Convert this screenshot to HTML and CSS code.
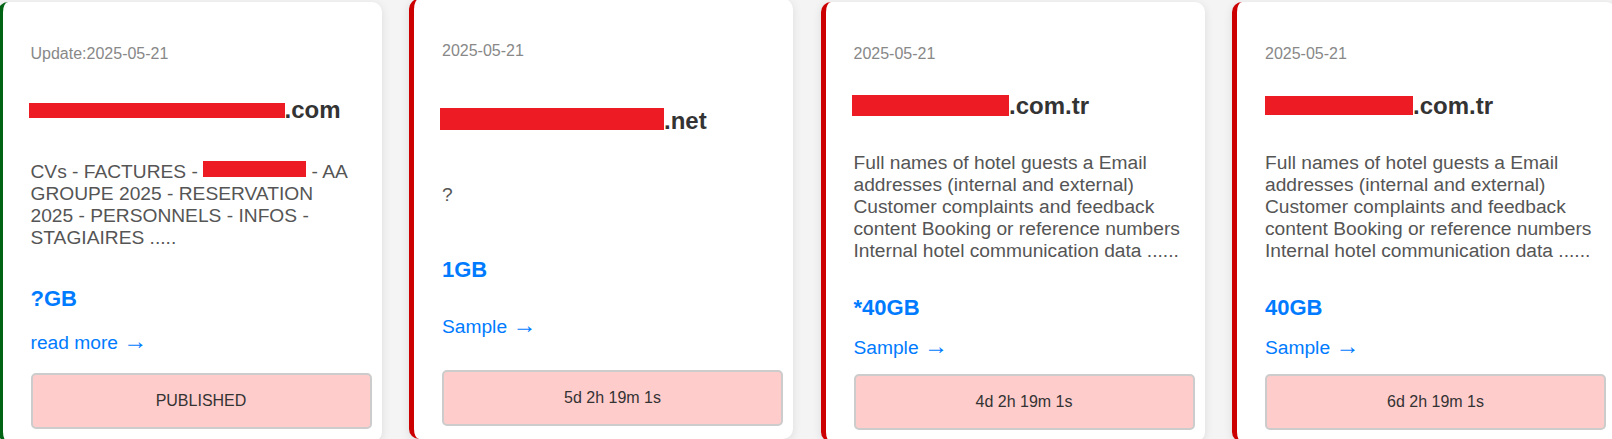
FILE: index.html
```html
<!DOCTYPE html>
<html lang="en">
<head>
    <meta charset="UTF-8">
    <meta name="viewport" content="width=device-width, initial-scale=1.0">
    <title>Leaks</title>
    <link rel="stylesheet" href="styles.css">
</head>
<body>

    <!-- Карточки -->
    <div class="cards">
        <div class="card done">
            <p class="date">Update:2025-05-21</p>
            <h3 class="title"><span class="redact r1"></span>.com</h3>
            <p class="desc">CVs - FACTURES - <span class="redact r-desc"></span> - AA GROUPE 2025 - RESERVATION 2025 - PERSONNELS - INFOS - STAGIAIRES .....</p>
            <p class="size">?GB</p>
            <a class="more" href="#">read more <span class="arrow">→</span></a>
            <div class="status">PUBLISHED</div>
        </div>

        <div class="card raised">
            <p class="date">2025-05-21</p>
            <h3 class="title"><span class="redact r2"></span>.net</h3>
            <p class="desc">?</p>
            <p class="size">1GB</p>
            <a class="more" href="#">Sample <span class="arrow">→</span></a>
            <div class="status">5d 2h 19m 1s</div>
        </div>

        <div class="card">
            <p class="date">2025-05-21</p>
            <h3 class="title"><span class="redact r3"></span>.com.tr</h3>
            <p class="desc">Full names of hotel guests a Email addresses (internal and external) Customer complaints and feedback content Booking or reference numbers Internal hotel communication data ......</p>
            <p class="size">*40GB</p>
            <a class="more" href="#">Sample <span class="arrow">→</span></a>
            <div class="status">4d 2h 19m 1s</div>
        </div>

        <div class="card">
            <p class="date">2025-05-21</p>
            <h3 class="title"><span class="redact r4"></span>.com.tr</h3>
            <p class="desc">Full names of hotel guests a Email addresses (internal and external) Customer complaints and feedback content Booking or reference numbers Internal hotel communication data ......</p>
            <p class="size">40GB</p>
            <a class="more" href="#">Sample <span class="arrow">→</span></a>
            <div class="status">6d 2h 19m 1s</div>
        </div>
    </div>

</body>
</html>
```

FILE: styles.css
```css
body {
    font-family: Arial, "Liberation Sans", sans-serif;
    background-color: #f4f4f4;
    margin: 0;
    padding: 0;
    overflow: hidden;
}
.cards {
    display: flex;
    gap: 27.5px;
    margin-left: -2.5px;
    padding-top: 2px;
    align-items: stretch;
}
.card {
    flex: 0 0 384px;
    box-sizing: border-box;
    display: flex;
    flex-direction: column;
    justify-content: space-between;
    background-color: white;
    border-radius: 10px;
    border-left: 5px solid #cc0000;
    box-shadow: 0 2px 10px rgba(0, 0, 0, 0.1);
    padding: 25px 20px 12px 28px;
}
.card.done {
    border-left-color: #006414;
}
.card.raised {
    transform: translateY(-3px); /* карточка под курсором */
}
.date {
    margin: 18px 0 0;
    font-size: 16px;
    color: #888;
}
.title {
    margin: 29px 0 0;
    font-size: 24px;
    font-weight: bold;
    color: #333;
}
.desc {
    margin: 32px 2px 0 0;
    font-size: 19.2px;
    color: #555;
}
.size {
    margin: 33px 0 0;
    font-size: 22px;
    font-weight: bold;
    color: #007bff;
}
.more {
    display: block;
    margin-top: 15.5px;
    font-size: 19.2px;
    line-height: 22px;
    color: #007bff;
    text-decoration: none;
}
.arrow {
    font-size: 24px;
    line-height: 0;
}
.status {
    margin: 15px -10px 0 0;
    padding: 17px 10px;
    background-color: #ffcccc;
    border: 2px solid #ccc;
    border-radius: 5px;
    text-align: center;
    font-size: 16px;
    color: #333;
}

/* закрашенные куски */
.redact {
    display: inline-block;
    background-color: #ed1c24;
}
.r1 {
    width: 256px;
    height: 15px;
    margin-left: -2px;
}
.r2 {
    width: 224px;
    height: 22px;
    margin-left: -2px;
    vertical-align: -1px;
}
.r3 {
    width: 157px;
    height: 21px;
    margin-left: -1.5px;
    vertical-align: -2px;
}
.r4 {
    width: 148px;
    height: 19px;
    vertical-align: -1px;
}
.r-desc {
    width: 103px;
    height: 16px;
    vertical-align: 1px;
}
```
